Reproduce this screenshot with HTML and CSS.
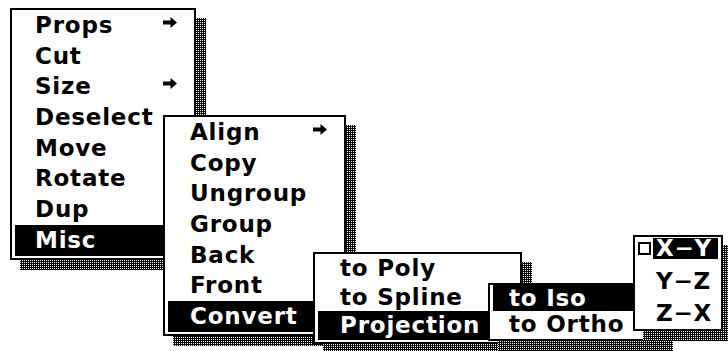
FILE: index.html
```html
<!DOCTYPE html>
<html lang="en">
<head>
    <meta charset="UTF-8">
    <title>Menus</title>
    <link rel="stylesheet" href="styles.css">
</head>
<body>
    <div class="desk">

        <div class="menu m1">
            <div class="shade"></div>
            <ul class="panel">
                <li class="item">Props <svg class="arrow" viewBox="0 0 14 11"><path d="M0 3.5h7.5V0L14 5.5 7.5 11V7.5H0z"/></svg></li>
                <li class="item">Cut</li>
                <li class="item">Size <svg class="arrow" viewBox="0 0 14 11"><path d="M0 3.5h7.5V0L14 5.5 7.5 11V7.5H0z"/></svg></li>
                <li class="item">Deselect</li>
                <li class="item">Move</li>
                <li class="item">Rotate</li>
                <li class="item">Dup</li>
                <li class="item on">Misc</li>
            </ul>
        </div>

        <div class="menu m2">
            <div class="shade"></div>
            <ul class="panel">
                <li class="item">Align <svg class="arrow" viewBox="0 0 14 11"><path d="M0 3.5h7.5V0L14 5.5 7.5 11V7.5H0z"/></svg></li>
                <li class="item">Copy</li>
                <li class="item">Ungroup</li>
                <li class="item">Group</li>
                <li class="item">Back</li>
                <li class="item">Front</li>
                <li class="item on">Convert</li>
            </ul>
        </div>

        <div class="menu m3">
            <div class="shade"></div>
            <ul class="panel">
                <li class="item">to Poly</li>
                <li class="item">to Spline</li>
                <li class="item on">Projection</li>
            </ul>
        </div>

        <div class="menu m4">
            <div class="shade"></div>
            <ul class="panel">
                <li class="item on">to Iso</li>
                <li class="item">to Ortho</li>
            </ul>
        </div>

        <div class="menu m5">
            <div class="shade"></div>
            <ul class="panel">
                <li class="item check"><span class="box"></span><span class="label">X&minus;Y</span></li>
                <li class="item">Y&minus;Z</li>
                <li class="item">Z&minus;X</li>
            </ul>
        </div>

    </div>
</body>
</html>
```

FILE: styles.css
```css
body {
    margin: 0;
    background: #fff;
}

.desk {
    position: relative;
    width: 728px;
    height: 351px;
    overflow: hidden;
    font-family: "DejaVu Sans", sans-serif;
    font-weight: bold;
    font-size: 23px;
    color: #000;
}

/* each popup sits where it was opened */
.menu {
    position: absolute;
    --lh: 30.7px;
    --pl: 22px;
}

.shade {
    position: absolute;
    top: 10px;
    left: 10px;
    right: -10px;
    bottom: -10px;
    background: repeating-conic-gradient(#000 0 75%, #fff 0 100%) 0 0 / 2px 2px;
}

.panel {
    position: relative;
    margin: 0;
    padding: 0 0 2px;
    list-style: none;
    background: #fff;
    border: 2px solid #000;
}

.item {
    display: flex;
    align-items: center;
    justify-content: space-between;
    margin: 0 3px;
    padding: 0 14px 0 var(--pl);
    height: var(--lh);
    line-height: var(--lh);
    letter-spacing: 0.8px;
    white-space: nowrap;
}

.item.on {
    background: #000;
    color: #fff;
}

.arrow {
    width: 14px;
    height: 11px;
    margin-bottom: 6px;
    fill: #000;
}

.m1 { left: 10px;  top: 8px;   width: 186px; --pl: 20px; z-index: 1; }
.m2 { left: 163px; top: 115px; width: 183px; z-index: 2; }
.m3 { left: 313px; top: 252px; width: 209px; --lh: 28.5px; z-index: 3; }
.m4 { left: 488px; top: 283px; width: 175px; --lh: 26px; --pl: 16px; z-index: 4; }
.m5 { left: 633px; top: 235px; width: 90px;  --lh: 32px; --pl: 18px; z-index: 5; }

.m5 .panel {
    padding-bottom: 0;
}

.item.check {
    height: 28px;
    padding: 0;
    align-items: flex-start;
}

.box {
    width: 9px;
    height: 9px;
    margin-top: 5px;
    border: 2px solid #000;
    background: #fff;
}

.label {
    flex: 1;
    height: 21px;
    margin: 1px 0 0 2px;
    padding-left: 3px;
    line-height: 21px;
    background: #000;
    color: #fff;
}
```
